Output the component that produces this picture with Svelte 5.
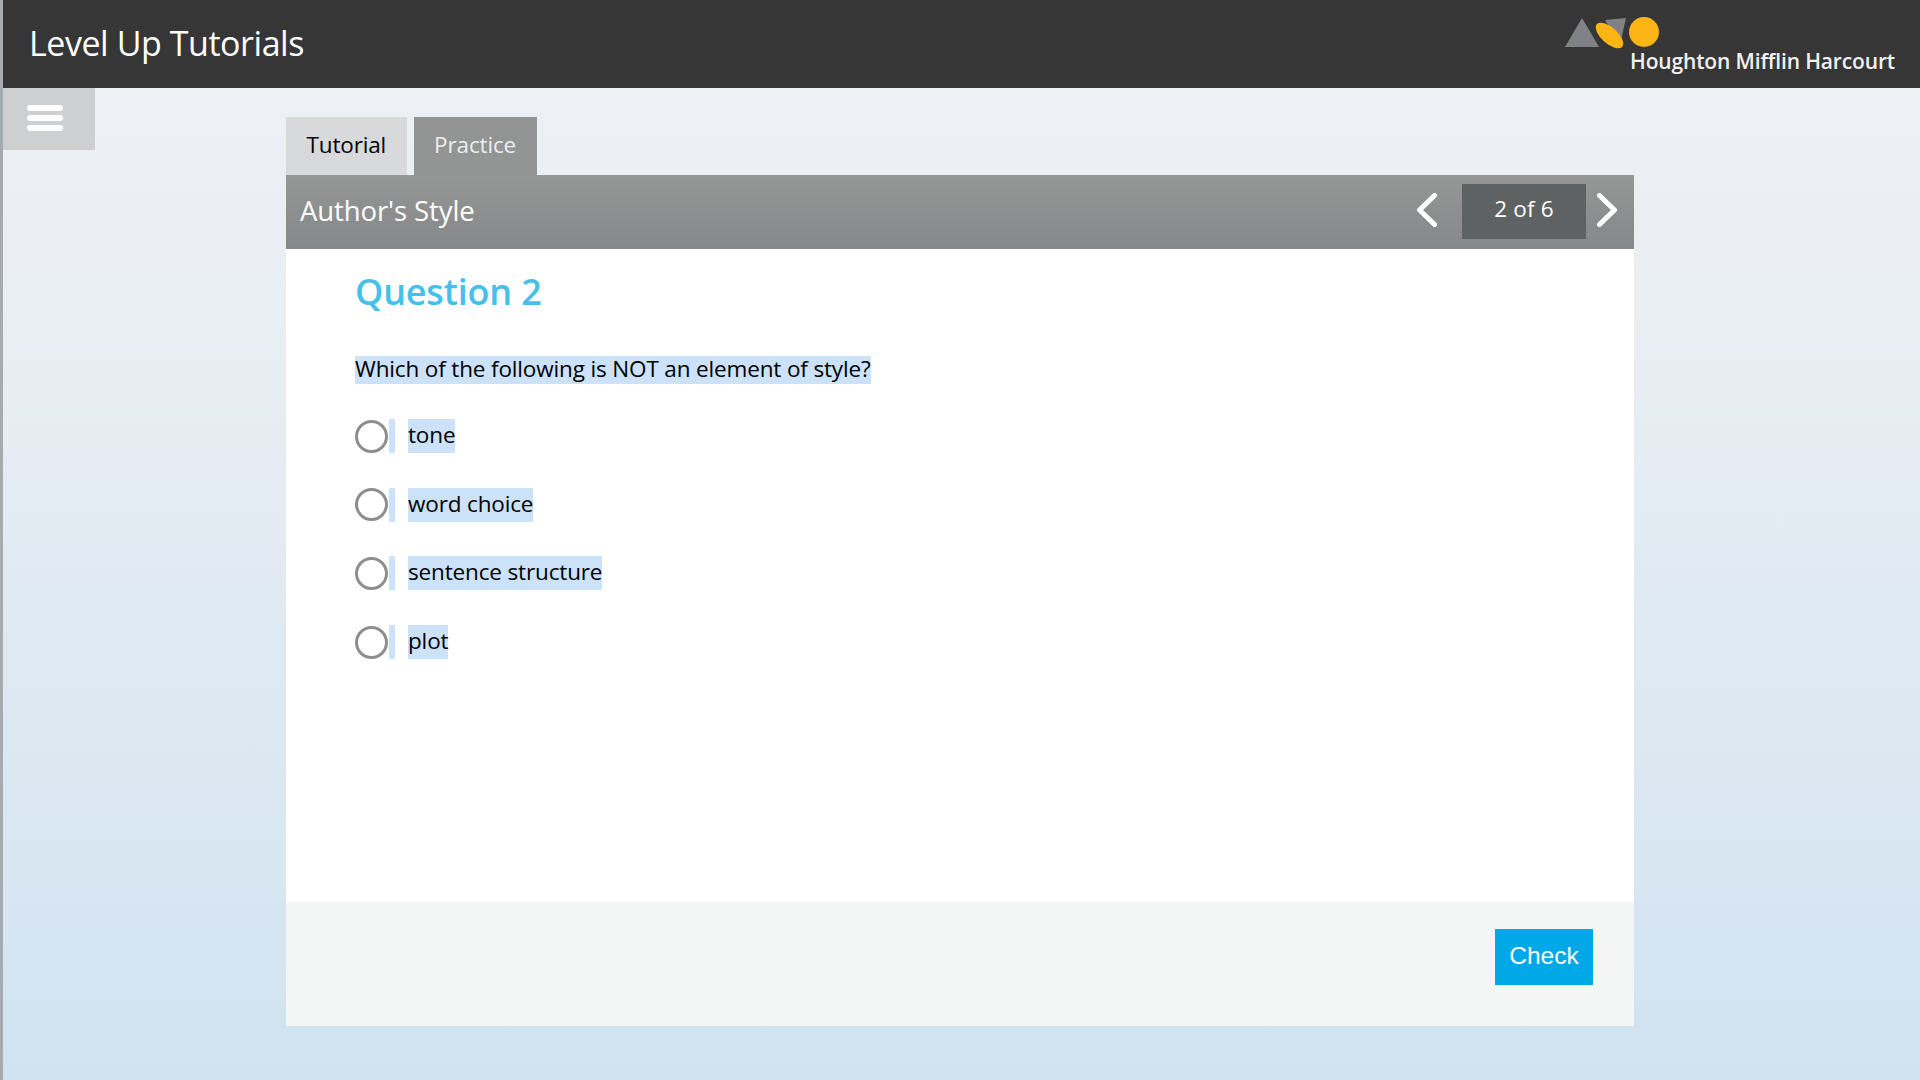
<script>
  const options = ['tone', 'word choice', 'sentence structure', 'plot'];
</script>

<div class="page">
  <header class="topbar">
    <h1>Level Up Tutorials</h1>
    <div class="brand">
      <svg width="95" height="34" viewBox="0 0 95 34" aria-hidden="true">
        <polygon points="0,31 17,2 34,31" fill="#808285" />
        <polygon points="40,4 61,2 55,29" fill="#808285" />
        <ellipse cx="44.5" cy="19.5" rx="17" ry="8" transform="rotate(42 44.5 19.5)" fill="#fdb515" />
        <circle cx="79" cy="16" r="15" fill="#fdb515" />
      </svg>
      <span class="wordmark">Houghton Mifflin Harcourt</span>
    </div>
  </header>

  <button class="menu" type="button" aria-label="Menu">
    <span></span><span></span><span></span>
  </button>

  <main class="wrap">
    <div class="tabs">
      <div class="tab active">Tutorial</div>
      <div class="tab dim">Practice</div>
    </div>

    <div class="titlebar">
      <div class="lesson">Author's Style</div>
      <div class="pager">
        <svg class="chev" width="20" height="34" viewBox="0 0 20 34" aria-hidden="true">
          <polyline points="17.5,2.5 2.5,17 17.5,31.5" />
        </svg>
        <div class="count">2 of 6</div>
        <svg class="chev" width="20" height="34" viewBox="0 0 20 34" aria-hidden="true">
          <polyline points="2.5,2.5 17.5,17 2.5,31.5" />
        </svg>
      </div>
    </div>

    <section class="body">
      <h2>Question 2</h2>
      <p class="prompt"><span>Which of the following is NOT an element of style?</span></p>
      <ul>
        {#each options as opt}
          <li>
            <span class="radio"></span>
            <span class="tick"></span>
            <span class="label">{opt}</span>
          </li>
        {/each}
      </ul>
    </section>

    <footer class="actions">
      <button class="check" type="button">Check</button>
    </footer>
  </main>
</div>

<style>
  :global(body) {
    margin: 0;
  }

  .page {
    position: relative;
    box-sizing: border-box;
    height: 1080px;
    overflow: hidden;
    border-left: 3px solid #a6abaf;
    background: linear-gradient(#eff1f4 0%, #e9eef3 30%, #d1e3f1 100%);
    font-family: "Open Sans", "Noto Sans", sans-serif;
  }

  .topbar {
    display: flex;
    justify-content: space-between;
    box-sizing: border-box;
    height: 88px;
    margin-left: -3px;
    padding: 0 25px 0 29px;
    background: #363636;
    color: #fff;
  }

  h1 {
    margin: 0;
    font-size: 34px;
    font-weight: 400;
    line-height: 86px;
    letter-spacing: -0.45px;
  }

  .brand {
    display: flex;
    flex-direction: column;
    align-items: flex-end;
    padding-top: 16px;
  }

  .brand svg {
    margin-right: 235px;
  }

  .wordmark {
    margin-top: -2px;
    font-size: 21px;
    font-weight: 600;
    line-height: 26px;
    letter-spacing: -0.15px;
    color: #f1f1f1;
  }

  .menu {
    position: absolute;
    top: 88px;
    left: 0;
    display: flex;
    flex-direction: column;
    gap: 4px;
    box-sizing: border-box;
    width: 92px;
    height: 62px;
    padding: 17px 0 0 24px;
    border: 0;
    background: #cdcfd1;
  }

  .menu span {
    width: 36px;
    height: 6px;
    border-radius: 3px;
    background: #fff;
  }

  .wrap {
    width: 1348px;
    margin: 29px 0 0 283px;
  }

  .tabs {
    display: flex;
    gap: 7px;
    height: 58px;
  }

  .tab {
    padding: 0 20.5px;
    font-size: 22.5px;
    line-height: 55px;
    letter-spacing: -0.15px;
  }

  .active {
    background: #d8d9db;
    color: #000;
  }

  .dim {
    background: #939595;
    color: #eee;
  }

  .titlebar {
    display: flex;
    justify-content: space-between;
    align-items: center;
    height: 74px;
    padding: 0 17px 0 14px;
    background: linear-gradient(#959797, #858788);
    color: #fff;
  }

  .lesson {
    padding-bottom: 4px;
    font-size: 27.5px;
    letter-spacing: -0.1px;
  }

  .pager {
    display: flex;
    align-items: center;
  }

  .chev {
    margin-bottom: 5px;
  }

  .chev polyline {
    fill: none;
    stroke: #fff;
    stroke-width: 5;
    stroke-linecap: round;
    stroke-linejoin: round;
  }

  .count {
    width: 124px;
    height: 55px;
    margin: 0 11px 1px 25px;
    background: #5f6262;
    font-size: 22.5px;
    line-height: 50px;
    text-align: center;
    letter-spacing: 0.15px;
  }

  .body {
    box-sizing: border-box;
    height: 653px;
    padding: 18px 69px 0;
    background: #fff;
  }

  h2 {
    margin: 0 0 39px;
    font-size: 36px;
    font-weight: 600;
    line-height: 50px;
    letter-spacing: -0.2px;
    color: #44c0ea;
  }

  .prompt {
    margin: 0 0 35px;
    height: 28px;
  }

  .prompt span,
  .label {
    display: inline-block;
    background: #cce2f9;
    color: #000;
    font-size: 22.5px;
    letter-spacing: -0.15px;
  }

  .prompt span {
    line-height: 26px;
    padding-bottom: 2px;
  }

  ul {
    display: flex;
    flex-direction: column;
    gap: 34.7px;
    margin: 0;
    padding: 0;
    list-style: none;
  }

  li {
    display: flex;
    align-items: center;
    height: 34px;
  }

  .radio {
    box-sizing: border-box;
    width: 33px;
    height: 33px;
    border: 3px solid #8e8e8e;
    border-radius: 50%;
    background: #fff;
  }

  .tick {
    width: 6px;
    height: 34px;
    margin-left: 1px;
    background: #cce2f9;
  }

  .label {
    margin-left: 13px;
    line-height: 32px;
    padding-bottom: 2px;
  }

  .actions {
    display: flex;
    justify-content: flex-end;
    align-items: flex-start;
    box-sizing: border-box;
    height: 124px;
    padding: 27px 41px 0 0;
    background: #f4f5f5;
  }

  .check {
    width: 98px;
    height: 56px;
    padding: 0 0 2px;
    border: 0;
    background: #00a8e8;
    color: #fff;
    font-family: "Liberation Sans", Arial, sans-serif;
    font-size: 24.5px;
  }
</style>
